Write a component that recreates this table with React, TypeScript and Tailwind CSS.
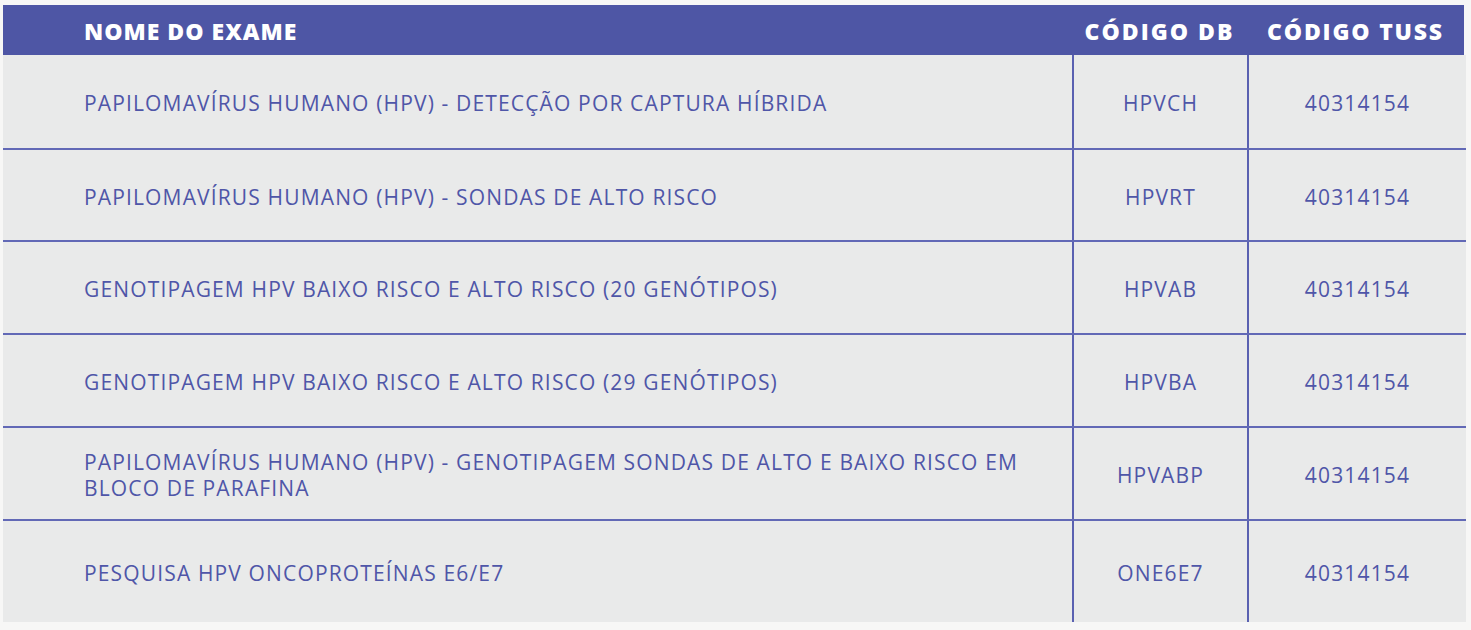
import React from "react";

const rows: { name: React.ReactNode; db: string; tuss: string; h: string }[] = [
  { name: "PAPILOMAVÍRUS HUMANO (HPV) - DETECÇÃO POR CAPTURA HÍBRIDA", db: "HPVCH", tuss: "40314154", h: "h-[93px]" },
  { name: "PAPILOMAVÍRUS HUMANO (HPV) - SONDAS DE ALTO RISCO", db: "HPVRT", tuss: "40314154", h: "h-[92px]" },
  { name: "GENOTIPAGEM HPV BAIXO RISCO E ALTO RISCO (20 GENÓTIPOS)", db: "HPVAB", tuss: "40314154", h: "h-[93px]" },
  { name: "GENOTIPAGEM HPV BAIXO RISCO E ALTO RISCO (29 GENÓTIPOS)", db: "HPVBA", tuss: "40314154", h: "h-[93px]" },
  {
    name: (
      <>
        PAPILOMAVÍRUS HUMANO (HPV) - GENOTIPAGEM SONDAS DE ALTO E BAIXO RISCO EM
        <br />
        BLOCO DE PARAFINA
      </>
    ),
    db: "HPVABP",
    tuss: "40314154",
    h: "h-[93px]",
  },
  { name: "PESQUISA HPV ONCOPROTEÍNAS E6/E7", db: "ONE6E7", tuss: "40314154", h: "h-[103px]" },
];

export default function App() {
  return (
    <div className="w-[1471px] h-[630px] bg-[#f7f7f6] pt-[5px] pl-[3px] overflow-hidden" style={{ fontFamily: "'Open Sans', 'Liberation Sans', sans-serif" }}>
      <div className="w-[1463px]">
        <div className="flex h-[50px] w-[1461px] bg-[#4e56a5] text-white font-extrabold text-[23px] items-center pt-[2px]">
          <div className="w-[1069px] pl-[81px] tracking-[1px]">NOME DO EXAME</div>
          <div className="w-[175px] text-center tracking-[2px]">CÓDIGO DB</div>
          <div className="flex-1 text-center tracking-[1.8px]">CÓDIGO TUSS</div>
        </div>
        <div className="bg-[#e9eaea] text-[#4f56a8] text-[21px] font-medium leading-[26px] tracking-[1.15px]">
          {rows.map((r, i) => (
            <div key={i} className={`flex ${r.h} ${i > 0 ? "border-t-2 border-[#6269b6]" : ""}`}>
              <div className="w-[1069px] pl-[81px] flex items-center pt-[3px]">
                <div>{r.name}</div>
              </div>
              <div className="w-[175px] border-l-2 border-[#5a61b1] flex items-center justify-center pt-[3px]">{r.db}</div>
              <div className="flex-1 border-l-2 border-[#5a61b1] flex items-center justify-center pt-[3px]">{r.tuss}</div>
            </div>
          ))}
        </div>
      </div>
    </div>
  );
}
